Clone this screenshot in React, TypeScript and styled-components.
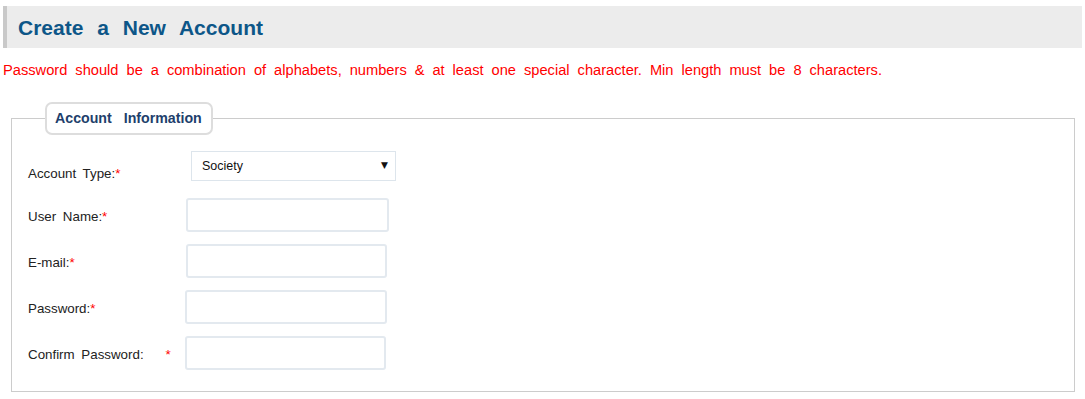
import React from "react";
import styled, { createGlobalStyle } from "styled-components";

const GlobalStyle = createGlobalStyle`
  html, body { margin: 0; padding: 0; background: #ffffff; }
  body { font-family: "Liberation Sans", Arial, sans-serif; }
`;

const Page = styled.div`
  padding: 6px 3px 0 3px;
`;

const HeaderBar = styled.div`
  background: #ececec;
  border-left: 4px solid #c9c9c9;
  height: 42px;
  display: flex;
  align-items: center;
  padding-left: 11px;
`;

const Title = styled.h1`
  margin: 0;
  font-size: 21px;
  font-weight: bold;
  color: #0d5688;
  word-spacing: 8px;
  line-height: 24px;
  padding-top: 2px;
`;

const Notice = styled.p`
  margin: 14px 0 0 0;
  font-size: 14.67px;
  line-height: 17px;
  color: #ff0000;
  word-spacing: 3.9px;
`;

const Fieldset = styled.fieldset`
  margin: 23px 7px 0 8px;
  border: 1px solid #cccccc;
  padding: 16px 16px 21px 16px;
  min-width: 0;
`;

const Legend = styled.legend`
  margin-left: 17px;
  padding: 0 9px 0 8px;
  height: 29px;
  line-height: 29px;
  border: 2px solid #dddddd;
  border-radius: 7px;
  font-size: 14.2px;
  font-weight: bold;
  color: #1e3f6c;
  word-spacing: 8px;
  background: #ffffff;
`;

const Form = styled.div`
  display: flex;
  flex-direction: column;
`;

const Row = styled.div<{ $first?: boolean }>`
  display: grid;
  grid-template-columns: 158px auto;
  align-items: ${(p) => (p.$first ? "end" : "center")};
  margin-bottom: ${(p) => (p.$first ? "17px" : "12px")};
  &:last-child { margin-bottom: 0; }
`;

const Label = styled.label<{ $first?: boolean }>`
  font-size: 13.33px;
  line-height: 15px;
  color: #222222;
  word-spacing: 3px;
  padding-top: ${(p) => (p.$first ? "0" : "3px")};
`;

const Req = styled.span<{ $gap?: number }>`
  color: #ff0000;
  margin-left: ${(p) => p.$gap ?? 0}px;
`;

const SelectWrap = styled.div`
  position: relative;
  width: 205px;
  height: 30px;
  margin-left: 5px;
`;

const Select = styled.select`
  appearance: none;
  -webkit-appearance: none;
  width: 100%;
  height: 100%;
  box-sizing: border-box;
  border: 1px solid #dde5ec;
  border-radius: 0;
  background: #ffffff;
  padding: 0 0 0 10px;
  font-family: "Liberation Sans", Arial, sans-serif;
  font-size: 12.5px;
  color: #111111;
  outline: none;
`;

const Arrow = styled.span`
  position: absolute;
  right: 8px;
  top: 9px;
  font-size: 9px;
  color: #111111;
  pointer-events: none;
  font-family: "DejaVu Sans", sans-serif;
`;

const Input = styled.input<{ $w?: number; $shift?: number }>`
  width: ${(p) => p.$w ?? 201}px;
  height: 34px;
  margin-left: ${(p) => p.$shift ?? 0}px;
  box-sizing: border-box;
  border: 2px solid #e3e9ef;
  border-radius: 3px;
  background: #ffffff;
  outline: none;
  font-family: "Liberation Sans", Arial, sans-serif;
  font-size: 13px;
`;

const fields: { label: string; type: string; gap?: number; w?: number; shift?: number }[] = [
  { label: "User Name:", type: "text", w: 203 },
  { label: "E-mail:", type: "email" },
  { label: "Password:", type: "password", shift: -1, w: 202 },
  { label: "Confirm Password:", type: "password", gap: 22, shift: -1 },
];

export default function App() {
  return (
    <>
      <GlobalStyle />
      <Page>
        <HeaderBar>
          <Title>Create a New Account</Title>
        </HeaderBar>
        <Notice>
          Password should be a combination of alphabets, numbers &amp; at least one special character. Min length must be 8 characters.
        </Notice>
        <Fieldset>
          <Legend>Account Information</Legend>
          <Form>
            <Row $first>
              <Label $first>
                Account Type:<Req>*</Req>
              </Label>
              <SelectWrap>
                <Select defaultValue="Society">
                  <option>Society</option>
                  <option>Individual</option>
                </Select>
                <Arrow>▼</Arrow>
              </SelectWrap>
            </Row>
            {fields.map((f) => (
              <Row key={f.label}>
                <Label>
                  {f.label}
                  <Req $gap={f.gap}>*</Req>
                </Label>
                <Input type={f.type} $w={f.w} $shift={f.shift} />
              </Row>
            ))}
          </Form>
        </Fieldset>
      </Page>
    </>
  );
}
